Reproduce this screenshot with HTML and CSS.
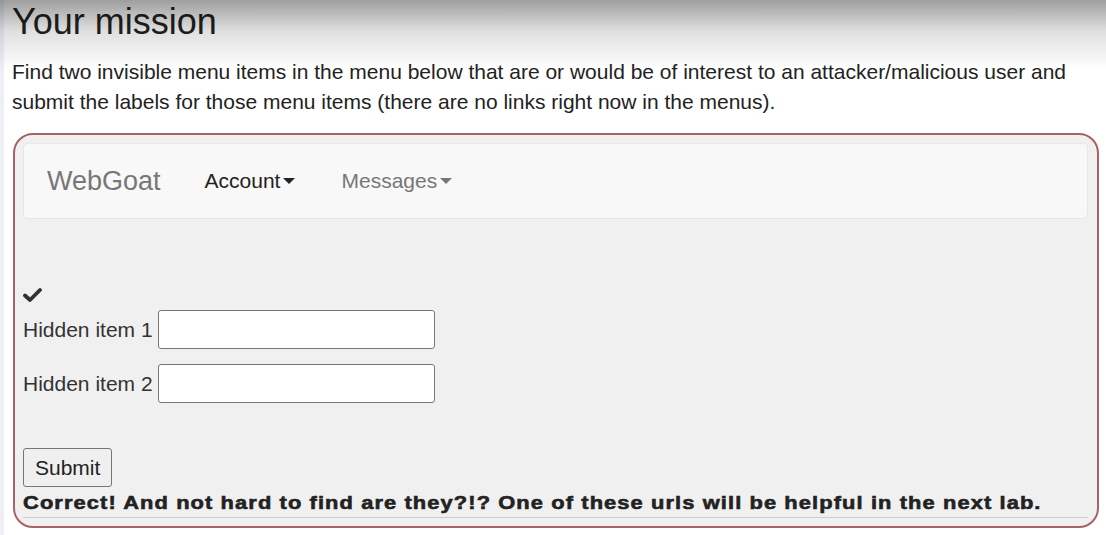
FILE: index.html
```html
<!DOCTYPE html>
<html>
<head>
<meta charset="utf-8">
<link rel="stylesheet" href="styles.css">
</head>
<body>
<div class="page">
  <div class="shade"></div>
  <div class="content">
    <h2 class="title">Your mission</h2>
    <p class="intro">Find two invisible menu items in the menu below that are or would be of interest to an attacker/malicious user and submit the labels for those menu items (there are no links right now in the menus).</p>
    <div class="attack">
      <nav class="navbar">
        <span class="brand">WebGoat</span>
        <span class="nav-item active">Account<span class="caret"></span></span>
        <span class="nav-item">Messages<span class="caret"></span></span>
      </nav>
      <div class="feedback-icon">
        <svg width="19" height="16" viewBox="0 0 19 16"><path d="M2 8.5 L7 13 L17 3" fill="none" stroke="#333" stroke-width="3.8" stroke-linecap="round" stroke-linejoin="round"/></svg>
      </div>
      <form class="form">
        <div class="row"><label>Hidden item 1</label><input type="text"></div>
        <div class="row"><label>Hidden item 2</label><input type="text"></div>
        <button type="button" class="submit">Submit</button>
      </form>
      <div class="feedback"><span class="feedback-text">Correct! And not hard to find are they?!? One of these urls will be helpful in the next lab.</span></div>
      <hr class="rule">
    </div>
  </div>
</div>
</body>
</html>
```
FILE: styles.css
```css
html, body {
  margin: 0;
  padding: 0;
  background: #fff;
}
.page {
  position: relative;
  min-height: 535px;
  border-left: 4px solid #eef0f6;
  font-family: "Liberation Sans", Arial, sans-serif;
  color: #333;
}
.shade {
  position: absolute;
  left: -4px;
  right: 0;
  top: 0;
  height: 70px;
  background: linear-gradient(to bottom, rgba(0,0,0,0.38), rgba(0,0,0,0.12) 45%, rgba(0,0,0,0));
  pointer-events: none;
}
.content {
  padding: 0 8px 0 8px;
}
.title {
  margin: 0;
  padding-top: 2px;
  font-size: 36px;
  font-weight: 400;
  line-height: 40px;
  color: #222;
}
.intro {
  margin: 15px 0 16px 0;
  font-size: 21px;
  line-height: 30px;
  color: #222;
}
.attack {
  margin-left: 1px;
  width: 1086px;
  box-sizing: border-box;
  height: 395px;
  border: 2px solid #a86464;
  border-radius: 20px;
  background: #f0f0f0;
  padding: 8px 9px 0 8px;
  display: flex;
  flex-direction: column;
}
.navbar {
  height: 76px;
  flex: none;
  box-sizing: border-box;
  background: #f8f8f8;
  border: 1px solid #e7e7e7;
  border-radius: 4px;
  display: flex;
  align-items: center;
  padding-left: 23px;
}
.brand {
  font-size: 27px;
  color: #777;
  margin-right: 44px;
}
.nav-item {
  font-size: 21px;
  color: #777;
  margin-right: 46px;
  display: inline-flex;
  align-items: center;
}
.nav-item.active {
  color: #222;
}
.caret {
  display: inline-block;
  width: 0;
  height: 0;
  margin-left: 3px;
  border-top: 6px solid currentColor;
  border-left: 6px solid transparent;
  border-right: 6px solid transparent;
}
.feedback-icon {
  margin-top: 68px;
  height: 23px;
  padding-left: 0;
}
.form {
  margin: 0;
  display: flex;
  flex-direction: column;
  align-items: flex-start;
}
.row {
  display: flex;
  align-items: center;
  margin-bottom: 15px;
  font-size: 21px;
}
.row label {
  margin-right: 5px;
}
.row input {
  width: 277px;
  height: 39px;
  box-sizing: border-box;
  border: 1px solid #767676;
  border-radius: 3px;
  background: #fff;
  font-size: 18px;
}
.submit {
  margin-top: 30px;
  height: 39px;
  padding: 0 11px;
  font-family: "Liberation Sans", Arial, sans-serif;
  font-size: 21px;
  color: #222;
  background: #efefef;
  border: 1px solid #767676;
  border-radius: 3px;
}
.feedback {
  margin-top: 5px;
  line-height: 22px;
  white-space: nowrap;
}
.feedback-text {
  display: inline-block;
  font-family: "Liberation Sans", Arial, sans-serif;
  font-weight: 700;
  font-size: 19px;
  letter-spacing: 0.96px;
  font-variant-ligatures: none;
  font-feature-settings: "liga" 0;
  -webkit-text-stroke: 0.6px #222;
  color: #222;
  transform: scaleX(1.15);
  transform-origin: left center;
}
.rule {
  margin: 2px 0 0 0;
  border: 0;
  border-top: 1px solid #ccc;
}
```
